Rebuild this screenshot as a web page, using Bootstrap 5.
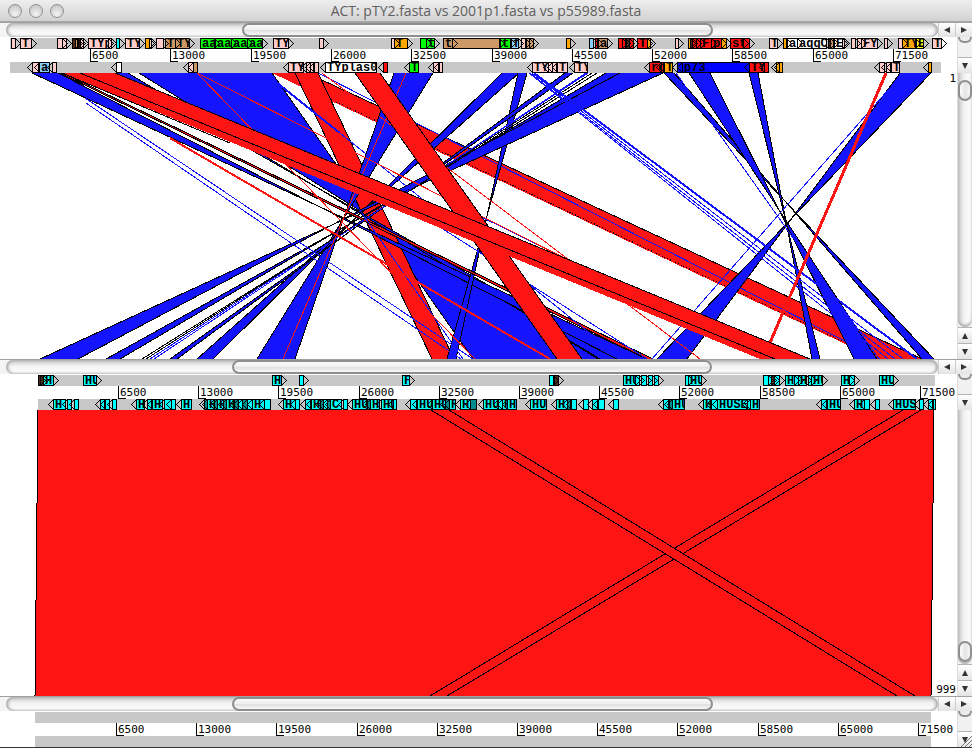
<!DOCTYPE html>
<html lang="en">
<head>
<meta charset="utf-8">
<meta name="viewport" content="width=device-width, initial-scale=1">
<title>ACT: pTY2.fasta vs 2001p1.fasta vs p55989.fasta</title>
<link href="https://cdn.jsdelivr.net/npm/bootstrap@5.3.0/dist/css/bootstrap.min.css" rel="stylesheet">
<style>
  .act-title { height: 22px; background: linear-gradient(#eeeeee, #d2d2d2); border-bottom: 1px solid #a8a8a8; color: #606060; }
  .act-title h1 { font: 14px/22px "Open Sans", sans-serif; }
  .act-light { width: 14px; height: 14px; border: 1px solid #8f8f8f; border-radius: 50%; background: radial-gradient(circle at 50% 75%, #f4f4f4, #bdbdbd); }
  .act-lights { width: 72px; padding-left: 8px; gap: 7px; }
  .act-map { height: 36px; }
  .act-compare { flex: 1 1 0; min-height: 0; }
  .act-draw { flex: 1 1 0; min-width: 0; height: 100%; shape-rendering: crispEdges; }
  .act-digits, .act-score { font: 11px "DejaVu Sans Mono", monospace; fill: #000; }
  .act-gene { font: bold 12px "Liberation Mono", monospace; fill: #000; }
  .act-score { color: #000; line-height: 12px; right: 16px; }
  .act-hbar { height: 15px; background: #f4f4f4; border-top: 1px solid #a0a0a0; }
  .act-htrack { margin-left: 6px; border-radius: 7px; background: linear-gradient(#c9c9c9, #f3f3f3 45%, #ffffff); box-shadow: inset 2px 0 3px #aaaaaa, inset -2px 0 3px #aaaaaa; }
  .act-hthumb { height: 14px; border: 2px solid #8e8e8e; border-radius: 7px; background: linear-gradient(#fbfbfb, #efefef 45%, #dedede 50%, #f8f8f8); }
  .act-vbar { width: 15px; background: #f1f1f1; border-left: 1px solid #dddddd; overflow: hidden; }
  .act-vtrack { border-radius: 0 0 7px 7px; background: linear-gradient(90deg, #c9c9c9, #f3f3f3 45%, #ffffff); box-shadow: inset 0 -2px 3px #aaaaaa; }
  .act-vthumb { height: 21px; border: 2px solid #8e8e8e; border-radius: 7px; background: linear-gradient(90deg, #fbfbfb, #e4e4e4 55%, #f8f8f8); }
  .act-stub { height: 6px; border: 2px solid #8e8e8e; border-top: 0; border-radius: 0 0 7px 7px; background: #ececec; }
  .act-arrow { padding: 0; border: 0; background: linear-gradient(#ffffff, #e4e4e4); display: flex; align-items: center; justify-content: center; color: #333333; }
  .act-arrow svg { width: 6px; height: 6px; fill: currentColor; }
  .act-hbar .act-arrow { width: 17px; border-left: 1px solid #cccccc; }
  .act-vbar .act-arrow { height: 16px; border-top: 1px solid #b5b5b5; }
  .act-foot { height: 1px; background: #3a3030; }
  .act-grip { right: 0; bottom: 0; width: 12px; height: 12px; stroke: #777777; }
</style>
<script src="https://cdn.jsdelivr.net/npm/bootstrap@5.3.0/dist/js/bootstrap.bundle.min.js"></script>
</head>
<body class="vh-100 d-flex flex-column bg-white overflow-hidden">

<header class="act-title d-flex align-items-center flex-shrink-0">
  <div class="act-lights d-flex">
    <button type="button" class="act-light p-0" aria-label="Close"></button>
    <button type="button" class="act-light p-0" aria-label="Minimise"></button>
    <button type="button" class="act-light p-0" aria-label="Zoom"></button>
  </div>
  <h1 class="flex-fill text-center text-nowrap m-0">ACT: pTY2.fasta vs 2001p1.fasta vs p55989.fasta</h1>
  <div class="act-lights"></div>
</header>

<main class="flex-fill d-flex flex-column overflow-hidden">
  <div class="act-hbar d-flex flex-shrink-0" data-start="25.3" data-size="50.6"></div>
  <section class="act-map d-flex flex-shrink-0" aria-label="pTY2.fasta">
    <svg class="act-draw" data-map="0" viewBox="0 0 957 36" preserveAspectRatio="none"></svg>
    <div class="act-vbar d-flex flex-column flex-shrink-0" data-kind="stub"></div>
  </section>
  <section class="act-compare d-flex position-relative" aria-label="Comparison of pTY2 and 2001p1">
    <svg class="act-draw" id="compareTop" viewBox="0 0 957 286" preserveAspectRatio="none"></svg>
    <span class="act-score position-absolute top-0">1</span>
    <div class="act-vbar d-flex flex-column flex-shrink-0" data-kind="full" data-start="3"></div>
  </section>

  <div class="act-hbar d-flex flex-shrink-0" data-start="24.2" data-size="51.6"></div>
  <section class="act-map d-flex flex-shrink-0" aria-label="2001p1.fasta">
    <svg class="act-draw" data-map="1" viewBox="0 0 957 36" preserveAspectRatio="none"></svg>
    <div class="act-vbar d-flex flex-column flex-shrink-0" data-kind="stub"></div>
  </section>
  <section class="act-compare d-flex position-relative" aria-label="Comparison of 2001p1 and p55989">
    <svg class="act-draw" id="compareBottom" viewBox="0 0 957 286" preserveAspectRatio="none"></svg>
    <span class="act-score position-absolute bottom-0">999</span>
    <div class="act-vbar d-flex flex-column flex-shrink-0" data-kind="full" data-start="99"></div>
  </section>

  <div class="act-hbar d-flex flex-shrink-0" data-start="24.3" data-size="51.6"></div>
  <section class="act-map d-flex flex-shrink-0 position-relative" aria-label="p55989.fasta">
    <svg class="act-draw" data-map="2" viewBox="0 0 957 36" preserveAspectRatio="none"></svg>
    <div class="act-vbar d-flex flex-column flex-shrink-0" data-kind="stub"></div>
    <svg class="act-grip position-absolute" viewBox="0 0 12 12"><path d="M1 12L12 1M5 12L12 5M9 12L12 9"/></svg>
  </section>
</main>
<footer class="act-foot flex-shrink-0"></footer>

<script>
const colours = { p: '#ffcccc', w: '#ffffff', o: '#ffa500', g: '#00ff00', b: '#cc9966', l: '#87cefa', r: '#ff1010', c: '#00ffff', n: '#0000ff', y: '#ffff00', k: '#4a2a1a', t: '#008c8c' };

/* Each gene: left edge, right edge, colour key, label */
const maps = [
  { from: 10, to: 941, tick: 90, step: 80.3,
    fwd: '11 15 p|20 31 p T|57 62 p|62 66 p|72 75 k|75 77 b|78 80 k|80 83 p|88 108 p TYp|108 111 p|116 119 c|125 139 p TY|145 149 o|149 151 p|156 163 p|165 175 b T|175 189 b TY|200 214 g aa|215 231 g aa|231 247 g aa|247 262 g aa|273 288 p TY|319 323 p|391 394 p|394 407 o T|420 426 g|426 434 g t|443 452 b t|452 499 b|500 510 g t|511 518 l f|521 525 p|526 529 b|529 533 b|566 570 o|589 593 l|595 597 r|598 607 b a|618 622 r|622 625 r|626 629 k|629 633 r|637 647 r T|647 650 o|675 678 p|688 690 o|690 692 k|692 696 r|696 700 r|700 711 r F|711 721 r p|721 726 o|730 743 r st|743 749 r|769 777 p T|783 786 o|787 797 w a|797 826 w aqqC|828 830 k|830 833 b|834 842 w E|842 844 p|851 855 p|857 861 p|861 877 p FYp|884 887 p|898 902 p|902 915 o TY|916 923 y E|932 941 p T',
    rev: '32 38 p|39 49 l ac|52 56 p|116 121 w|188 193 p|193 197 b|288 303 p TYp|306 310 p|310 313 p|314 318 p|325 376 w TYplas0|383 387 r|409 418 g T|433 438 p|439 442 p|532 548 p TYp|548 552 p|552 556 p|557 567 p T|574 587 p TY|649 661 r re|661 663 r|664 672 o T|677 682 n|682 749 n p73|749 764 r TY|764 768 r|776 779 o|779 782 o|879 884 p|886 890 p|891 899 p T|928 931 o' },
  { from: 38, to: 935, tick: 118, step: 80.2,
    fwd: '38 40 k|40 43 k|43 53 c HU|83 96 c HU|272 281 c H|299 303 c|402 409 c F|549 553 c|554 558 k|623 635 c HU|635 639 c|641 646 c|648 652 c|654 658 c|685 688 c|688 701 c HU|763 768 c|768 771 c|771 774 k|774 779 c|785 794 c H|794 798 c|798 806 c HU|808 811 c|811 822 c HU|841 849 c H|849 854 c|879 893 c HU',
    rev: '53 65 c H|67 71 c|74 78 c|100 104 c|105 109 c|112 116 c|136 144 c H|147 151 c|152 162 c H|164 171 c|171 175 c|181 191 c H|204 207 t|207 214 c H|214 217 t|217 223 c H|223 226 t|226 234 c H|234 238 t|238 242 c|242 247 t|247 252 c|252 264 c H|264 270 c|283 295 c H|295 299 c|305 310 c|311 320 c H|320 323 t|323 327 c|327 330 t|330 341 c C|343 347 c|352 367 c HU|367 370 t|370 379 c H|381 393 c HU|393 396 c|410 416 c|417 432 c HU|432 445 c HU|445 449 t|449 455 c R|460 470 c H|470 476 t|483 498 c HU|498 502 c|502 507 c H|507 516 c H|530 546 c HU|556 567 c H|567 570 t|571 576 c|583 588 c|592 597 c|598 604 c|613 618 c|663 668 c|669 672 t|672 684 c HU|703 711 c H|711 717 c|717 747 c HUSE|747 750 c|750 759 c H|821 826 c|827 840 c HU|854 864 c H|864 869 c|875 879 c|893 915 c HUS|919 923 c|928 932 c|933 935 c' },
  { from: 35, to: 931, tick: 116, step: 80.2, fwd: '', rev: '' }
];

const NS = 'http://www.w3.org/2000/svg';
function add(parent, tag, attrs, text) {
  const el = document.createElementNS(NS, tag);
  for (const key in attrs) el.setAttribute(key, attrs[key]);
  if (text) el.textContent = text;
  parent.appendChild(el);
  return el;
}

function drawGenes(svg, list, y, forward) {
  if (!list) return;
  const genes = list.split('|').map(g => g.split(' '));
  for (const [a, b, colour, label] of genes) {
    const x1 = +a, x2 = +b;
    add(svg, 'rect', { x: x1 + .5, y: y + .5, width: x2 - x1, height: 10, fill: colours[colour], stroke: '#000' });
    if (label) {
      const clip = add(svg, 'svg', { x: x1 + 1, y: y, width: Math.max(x2 - x1, 1), height: 11 });
      add(clip, 'text', { x: 1, y: 9, class: 'act-gene' }, label);
    }
  }
  for (const [a, b] of genes) {
    const edge = (forward ? +b : +a) + .5, tip = edge + (forward ? 5 : -5);
    add(svg, 'path', { d: `M${edge} ${y + .5}L${tip} ${y + 5.5}L${edge} ${y + 10.5}`, fill: 'none', stroke: '#000' });
  }
}

document.querySelectorAll('[data-map]').forEach(svg => {
  const m = maps[svg.dataset.map];
  for (const y of [1, 25]) add(svg, 'rect', { x: m.from, y, width: m.to - m.from, height: 11, fill: '#c8c8c8' });
  for (let i = 0; i < 11; i++) {
    const x = Math.round(m.tick + i * m.step);
    add(svg, 'path', { d: `M${x + .5} 12V24.5H${x + 8}`, fill: 'none', stroke: '#000' });
    add(svg, 'text', { x: x + 2, y: 22, class: 'act-digits' }, String(6500 * (i + 1)));
  }
  drawGenes(svg, m.fwd, 1, true);
  drawGenes(svg, m.rev, 25, false);
});

const RED = '#ff1414', BLUE = '#1414ff';
function band(svg, t1, t2, b1, b2, fill, edges = 'lr') {
  add(svg, 'path', { d: `M${t1} 0L${t2} 0L${b2} 286L${b1} 286Z`, fill });
  if (edges.includes('l')) line(svg, t1, b1, '#000');
  if (edges.includes('r')) line(svg, t2, b2, '#000');
}
function line(svg, t, b, stroke, width = 1, dash = '', from = 0, to = 286) {
  const at = y => t + (b - t) * y / 286;
  add(svg, 'path', { d: `M${at(from)} ${from}L${at(to)} ${to}`, stroke, 'stroke-width': width, 'stroke-dasharray': dash, fill: 'none' });
}

const top1 = document.getElementById('compareTop');
band(top1, 139, 272, 598, 473, BLUE);
band(top1, 272, 307, 877, 922, RED, 'r');
line(top1, 275, 880, '#000', 1, '1 2', 20);
line(top1, 318, 880, BLUE, 1);
band(top1, 295, 318, 432, 454, RED);
[
  [116, 128, 618, 600], [32, 58, 647, 617],
  [394, 433, 295, 257], [502, 519, 213, 197], [518, 527, 456, 447],
  [565, 573, 177, 170], [606, 622, 120, 106], [620, 663, 78, 40],
  [664, 674, 934, 922], [689, 710, 877, 854], [749, 758, 820, 812],
  [900, 931, 687, 657]
].forEach(b => band(top1, ...b, BLUE));
band(top1, 60, 63, 647, 653, RED);
line(top1, 588, 150, BLUE); line(top1, 592, 146, '#000'); line(top1, 597, 142, '#000'); line(top1, 586, 154, BLUE);
line(top1, 406, 283, RED);
line(top1, 48, 473, BLUE, 1, '', 25); line(top1, 42, 461, BLUE, 1, '', 30);
line(top1, 265, 622, BLUE, 2, '', 0, 60); line(top1, 265, 622, BLUE, 1, '', 60);
line(top1, 198, 647, BLUE, 1, '', 120); line(top1, 191, 768, BLUE, 1, '', 130);
line(top1, 265, 463, BLUE, 1, '', 135);
line(top1, 530, 895, BLUE); line(top1, 532, 903, BLUE); line(top1, 534, 917, BLUE, 2); line(top1, 529, 888, BLUE);
line(top1, 903, 652, BLUE, 1, '', 15); line(top1, 676, 879, BLUE, 1);
line(top1, 58, 550, RED, 2, '', 65);
line(top1, 197, 475, RED); line(top1, 197, 765, RED); line(top1, 322, 700, RED);
line(top1, 886, 763, RED, 3, '', 0, 270);
band(top1, 355, 380, 557, 582, RED);
band(top1, 62, 115, 760, 810, RED, 'r');
line(top1, 80, 775, '#000');
line(top1, 62, 748, '#000', 1, '', 0, 70);

const low = document.getElementById('compareBottom');
band(low, 38, 934, 35, 931, RED);
band(low, 903, 921, 430, 447, RED);
band(low, 431, 449, 897, 915, RED);

/* Scroll bars */
const arrows = { up: ['Scroll up', 'M0 7L3.500 0L7 7Z'], down: ['Scroll down', 'M0 0L7 0L3.500 7Z'], left: ['Scroll left', 'M7 0V7L0 3.500Z'], right: ['Scroll right', 'M0 0L7 3.500L0 7Z'] };
const arrow = d => `<button type="button" class="act-arrow flex-shrink-0" aria-label="${arrows[d][0]}"><svg viewBox="0 0 7 7"><path d="${arrows[d][1]}"/></svg></button>`;
document.querySelectorAll('.act-hbar').forEach(bar => {
  bar.innerHTML = `<div class="act-htrack flex-fill" role="scrollbar" aria-orientation="horizontal" aria-valuenow="${bar.dataset.start}"><div class="act-hthumb" style="margin-left:${bar.dataset.start}%;width:${bar.dataset.size}%"></div></div>` + arrow('left') + arrow('right');
});
document.querySelectorAll('.act-vbar').forEach(bar => {
  if (bar.dataset.kind === 'stub') {
    bar.innerHTML = '<div class="act-stub"></div><div class="flex-fill"></div>' + arrow('down');
  } else {
    const s = +bar.dataset.start;
    bar.innerHTML = `<div class="act-vtrack flex-fill d-flex flex-column" role="scrollbar" aria-orientation="vertical" aria-valuenow="${s}"><div style="flex-grow:${s}"></div><div class="act-vthumb flex-shrink-0"></div><div style="flex-grow:${100 - s}"></div></div>` + arrow('up') + arrow('down');
  }
});
</script>
</body>
</html>
